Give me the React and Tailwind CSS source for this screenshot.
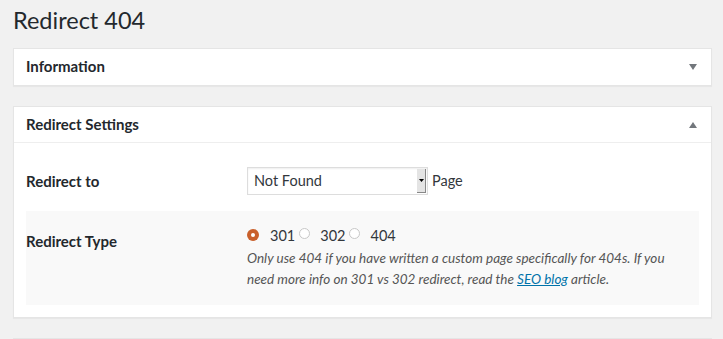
export default function App() {
  return (
    <div className="h-[339px] overflow-hidden bg-[#f1f1f1] px-[13px] pt-[6px] font-['Lato','Open_Sans',sans-serif] text-[#23282d]">
      <h1 className="text-[23.5px] leading-[29px] font-normal">Redirect 404</h1>

      <div className="mt-[13px] w-[699px] border border-[#e5e5e5] bg-white shadow-[0_1px_1px_rgba(0,0,0,0.04)]">
        <div className="flex h-[36px] items-center justify-between pl-3">
          <h2 className="-mt-[2px] text-[15px] font-bold">Information</h2>
          <button className="flex h-[36px] w-[36px] items-center justify-center">
            <svg width="8" height="6" viewBox="0 0 8 6">
              <path d="M0 0h8L4 6z" fill="#72777c" />
            </svg>
          </button>
        </div>
      </div>

      <div className="mt-[20px] w-[699px] border border-[#e5e5e5] bg-white shadow-[0_1px_1px_rgba(0,0,0,0.04)]">
        <div className="flex h-[36px] items-center justify-between border-b border-[#eeeeee] pl-3">
          <h2 className="text-[15px] font-bold">Redirect Settings</h2>
          <button className="flex h-[36px] w-[36px] items-center justify-center">
            <svg width="8" height="6" viewBox="0 0 8 6">
              <path d="M0 6h8L4 0z" fill="#72777c" />
            </svg>
          </button>
        </div>

        <div className="px-3 pb-3 text-[14px] text-[#23282d]">
          <div className="flex items-center pt-6 pb-4">
            <div className="w-[221px] text-[15px] font-bold">Redirect to</div>
            <div className="flex items-center gap-[4px]">
              <div className="flex h-[28px] w-[181px] items-stretch border border-[#dddddd] bg-white shadow-[inset_0_1px_2px_rgba(0,0,0,0.07)]">
                <span className="flex flex-1 items-center pl-[6px] text-[14.5px] text-[#32373c]">Not Found</span>
                <span className="my-[1px] mr-[1px] flex w-[9px] items-center justify-center border-r border-b border-[#888] bg-[#e4e4e4]">
                  <svg width="5" height="3" viewBox="0 0 5 3">
                    <path d="M0 0h5L2.5 3z" fill="#000" />
                  </svg>
                </span>
              </div>
              <span className="text-[14.5px] text-[#32373c]">Page</span>
            </div>
          </div>

          <div className="flex bg-[#f9f9f9] pt-[15px] pb-[15px]">
            <div className="w-[221px] pt-[5px] text-[15px] font-bold leading-[20px]">Redirect Type</div>
            <div className="flex-1 pr-3">
              <div className="flex h-[20px] items-center text-[14.5px] text-[#32373c]">
                <span className="-mt-[2px] flex h-[12px] w-[12px] items-center justify-center rounded-full bg-[#c9602b]">
                  <span className="h-[4px] w-[4px] rounded-full bg-white" />
                </span>
                <span className="ml-[11px]">301</span>
                <span className="ml-[4px] -mt-[5px] h-[11px] w-[11px] rounded-full border border-[#c8c8c8] bg-white" />
                <span className="ml-[10px]">302</span>
                <span className="ml-[4px] -mt-[5px] h-[11px] w-[11px] rounded-full border border-[#c8c8c8] bg-white" />
                <span className="ml-[10px]">404</span>
              </div>
              <p className="mt-[2px] text-[13.5px] leading-[21px] italic text-[#555555]">
                Only use 404 if you have written a custom page specifically for 404s. If you need more info on 301 vs 302
                redirect, read the <a href="#" className="text-[#0073aa] underline">SEO blog</a> article.
              </p>
            </div>
          </div>
        </div>
      </div>

      <div className="mt-[20px] h-[10px] w-[699px] border border-[#e5e5e5] bg-white" />
    </div>
  );
}
